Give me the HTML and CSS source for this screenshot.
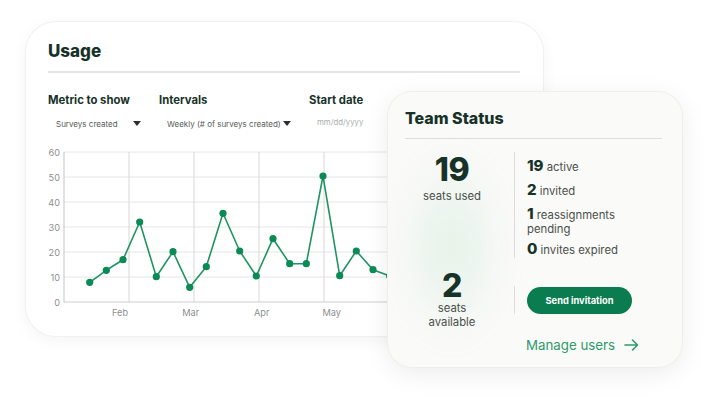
FILE: index.html
```html
<!DOCTYPE html>
<html>
<head>
<meta charset="utf-8">
<link rel="stylesheet" href="styles.css">
</head>
<body>
<div class="stage">
  <section class="usage">
    <h1 class="title">Usage</h1>
    <div class="filters">
      <div class="filter f1">
        <div class="label">Metric to show</div>
        <div class="select"><span>Surveys created</span><span class="caret"></span></div>
      </div>
      <div class="filter f2">
        <div class="label">Intervals</div>
        <div class="select"><span>Weekly (# of surveys created)</span><span class="caret"></span></div>
      </div>
      <div class="filter f3">
        <div class="label">Start date</div>
        <div class="select date"><span>mm/dd/yyyy</span></div>
      </div>
    </div>
    <svg class="chart" width="500" height="180" viewBox="0 0 500 180">
      <g class="hgrid">
        <line x1="24" y1="7" x2="490" y2="7"/>
        <line x1="24" y1="32" x2="490" y2="32"/>
        <line x1="24" y1="57" x2="490" y2="57"/>
        <line x1="24" y1="82" x2="490" y2="82"/>
        <line x1="24" y1="107" x2="490" y2="107"/>
        <line x1="24" y1="132" x2="490" y2="132"/>
      </g>
      <g class="vgrid">
        <line x1="89" y1="7" x2="89" y2="157"/>
        <line x1="154" y1="7" x2="154" y2="157"/>
        <line x1="219" y1="7" x2="219" y2="157"/>
        <line x1="284" y1="7" x2="284" y2="157"/>
        <line x1="349" y1="7" x2="349" y2="157"/>
        <line x1="414" y1="7" x2="414" y2="157"/>
        <line x1="479" y1="7" x2="479" y2="157"/>
      </g>
      <g class="axis">
        <line x1="24" y1="7" x2="24" y2="157.5"/>
        <line x1="24" y1="157" x2="490" y2="157"/>
      </g>
      <g class="ylabels">
        <text x="20" y="10.5">60</text>
        <text x="20" y="35.5">50</text>
        <text x="20" y="60.5">40</text>
        <text x="20" y="85.5">30</text>
        <text x="20" y="110.5">20</text>
        <text x="20" y="135.5">10</text>
        <text x="20" y="160.5">0</text>
      </g>
      <g class="xlabels">
        <text x="80" y="171">Feb</text>
        <text x="150.7" y="171">Mar</text>
        <text x="221.7" y="171">Apr</text>
        <text x="291.7" y="171">May</text>
      </g>
      <polyline class="line" points="49.7,137.3 66.3,125.3 83,114.7 99.7,77 116.3,131.7 133,106.7 149.7,142.3 166.3,121.7 183,68.3 199.7,106 216.3,131 233,93.7 249.7,118.7 266.3,118.7 283,31 299.7,130.7 316.3,106 333,124.7 349.7,131 366.3,112 383,120 399.7,100"/>
      <g class="dots">
        <circle cx="49.7" cy="137.3" r="3.6"/>
        <circle cx="66.3" cy="125.3" r="3.6"/>
        <circle cx="83" cy="114.7" r="3.6"/>
        <circle cx="99.7" cy="77" r="3.6"/>
        <circle cx="116.3" cy="131.7" r="3.6"/>
        <circle cx="133" cy="106.7" r="3.6"/>
        <circle cx="149.7" cy="142.3" r="3.6"/>
        <circle cx="166.3" cy="121.7" r="3.6"/>
        <circle cx="183" cy="68.3" r="3.6"/>
        <circle cx="199.7" cy="106" r="3.6"/>
        <circle cx="216.3" cy="131" r="3.6"/>
        <circle cx="233" cy="93.7" r="3.6"/>
        <circle cx="249.7" cy="118.7" r="3.6"/>
        <circle cx="266.3" cy="118.7" r="3.6"/>
        <circle cx="283" cy="31" r="3.6"/>
        <circle cx="299.7" cy="130.7" r="3.6"/>
        <circle cx="316.3" cy="106" r="3.6"/>
        <circle cx="333" cy="124.7" r="3.6"/>
        <circle cx="349.7" cy="131" r="3.6"/>
      </g>
    </svg>
  </section>

  <section class="team">
    <div class="glow"></div>
    <div class="team-inner">
      <h2 class="team-title">Team Status</h2>
      <div class="row row1">
        <div class="big-stat">
          <div class="big-num">19</div>
          <div class="big-label">seats used</div>
        </div>
        <div class="divider"></div>
        <ul class="stats">
          <li class="s1"><b>19</b> active</li>
          <li class="s2"><b>2</b> invited</li>
          <li class="s3"><b>1</b> reassignments<br>pending</li>
          <li class="s4"><b>0</b> invites expired</li>
        </ul>
      </div>
      <div class="row row2">
        <div class="big-stat">
          <div class="big-num">2</div>
          <div class="big-label">seats<br>available</div>
        </div>
        <div class="divider short"></div>
        <button class="btn">Send invitation</button>
      </div>
      <a class="manage" href="#">Manage users
        <svg class="arrow" width="15" height="12" viewBox="0 0 15 12"><path d="M1 6H13.5M8.5 1L13.5 6L8.5 11" fill="none" stroke="currentColor" stroke-width="1.6" stroke-linecap="round" stroke-linejoin="round"/></svg>
      </a>
    </div>
  </section>
</div>
</body>
</html>
```

FILE: styles.css
```css
* { box-sizing: border-box; }
html, body { margin: 0; padding: 0; background: #ffffff; }
body {
  font-family: "Inter", "Noto Sans", "Liberation Sans", sans-serif;
  color: #173228;
  width: 710px;
  height: 400px;
  overflow: hidden;
}
.stage {
  position: relative;
  padding: 22px 0 0 26px;
  height: 400px;
}

/* ---------- Usage card ---------- */
.usage {
  width: 517px;
  height: 314px;
  background: #ffffff;
  border-radius: 30px;
  box-shadow: 0 0 0 1px #f1f1f1, 0 4px 16px rgba(0, 0, 0, 0.05);
  padding: 19px 23px 0 22px;
  overflow: hidden;
}
.title {
  margin: 0;
  font-size: 17px;
  line-height: 20px;
  font-weight: 800;
  color: #173228;
  padding-bottom: 9.5px;
  border-bottom: 2px solid #e6e6e6;
}
.filters {
  display: flex;
  margin-top: 19px;
}
.filter.f1 { width: 111px; }
.filter.f2 { width: 150px; }
.filter.f3 { flex: 1; }
.label {
  font-size: 11.3px;
  line-height: 16px;
  font-weight: 700;
  color: #173228;
  white-space: nowrap;
}
.select {
  display: flex;
  align-items: center;
  margin-top: 9px;
  padding-left: 8px;
  font-size: 8px;
  line-height: 14px;
  color: #555b58;
  white-space: nowrap;
}
.f1 .select .caret { margin-left: 15px; }
.f2 .select .caret { margin-left: 2px; }
.caret {
  display: inline-block;
  width: 0;
  height: 0;
  border-left: 4px solid transparent;
  border-right: 4px solid transparent;
  border-top: 5px solid #2b2f2d;
}
.select.date {
  color: #a9aeab;
  font-size: 7.8px;
  margin-top: 7px;
}
.chart {
  display: block;
  margin: 14px 0 0 -8px;
  overflow: visible;
}
.hgrid line { stroke: #e6e6e6; stroke-width: 1; }
.vgrid line { stroke: #d7d7d7; stroke-width: 1; }
.axis line { stroke: #cdcdcd; stroke-width: 1.2; }
.ylabels text {
  font-family: "Inter", "Liberation Sans", sans-serif;
  font-size: 9.2px;
  fill: #8d8f8e;
  text-anchor: end;
}
.xlabels text {
  font-family: "Inter", "Liberation Sans", sans-serif;
  font-size: 9.2px;
  fill: #8d8f8e;
  text-anchor: middle;
}
.line { fill: none; stroke: #1f9464; stroke-width: 1.6; stroke-linejoin: round; }
.dots circle { fill: #0c8a56; }

/* ---------- Team card ---------- */
.team {
  position: absolute;
  left: 388px;
  top: 92px;
  width: 294px;
  height: 275px;
  background: #fafaf8;
  border-radius: 24px;
  box-shadow: 0 0 0 1px #efefec, 0 6px 26px rgba(0, 0, 0, 0.08);
  overflow: hidden;
}
.glow {
  position: absolute;
  left: 6px;
  top: 55px;
  width: 115px;
  height: 200px;
  border-radius: 50%;
  background: radial-gradient(ellipse at center, rgba(170, 220, 188, 0.28), rgba(170, 220, 188, 0) 70%);
  filter: blur(12px);
}
.team-inner {
  position: relative;
  padding: 16px 20px 0 17px;
}
.team-title {
  margin: 0;
  font-size: 16px;
  line-height: 20px;
  font-weight: 800;
  color: #173228;
  padding-bottom: 10px;
  border-bottom: 1px solid #dcdcda;
}
.row { display: flex; }
.row1 {
  margin-top: 13px;
  align-items: stretch;
}
.big-stat {
  width: 94px;
  margin-right: 15px;
  text-align: center;
}
.row1 .big-stat { padding-top: 1.5px; }
.big-num {
  font-size: 32px;
  line-height: 32px;
  font-weight: 800;
  color: #173228;
  letter-spacing: -0.5px;
}
.big-label {
  font-size: 11.3px;
  line-height: 14px;
  color: #4a4f4c;
  margin-top: 3.5px;
}
.row2 .big-num { line-height: 29px; }
.row2 .big-label { margin-top: 1px; }
.divider {
  width: 1px;
  background: #dcdcda;
  flex: none;
}
.divider.short { height: 28px; }
.stats {
  list-style: none;
  margin: 0;
  padding: 8px 0 1px 12px;
  font-size: 11.3px;
  line-height: 14px;
  color: #4a4f4c;
}
.stats li { line-height: 14px; }
.stats .s1 { margin-bottom: 10px; }
.stats .s2 { margin-bottom: 10px; }
.stats .s3 { margin-bottom: 7px; }
.stats b {
  font-size: 15px;
  line-height: 10px;
  font-weight: 800;
  color: #173228;
}
.row2 {
  margin-top: 13px;
  align-items: center;
}
.btn {
  margin-left: 12px;
  width: 105px;
  height: 27px;
  border: none;
  border-radius: 14px;
  background: #0b7c4f;
  color: #ffffff;
  font-family: "Inter", "Liberation Sans", sans-serif;
  font-size: 9.3px;
  font-weight: 700;
  padding: 0;
}
.manage {
  display: flex;
  align-items: center;
  margin: 7px 0 0 121px;
  font-size: 13.3px;
  line-height: 18px;
  color: #2f9a6b;
  text-decoration: none;
}
.arrow { margin-left: 9px; color: #2f9a6b; }
```
